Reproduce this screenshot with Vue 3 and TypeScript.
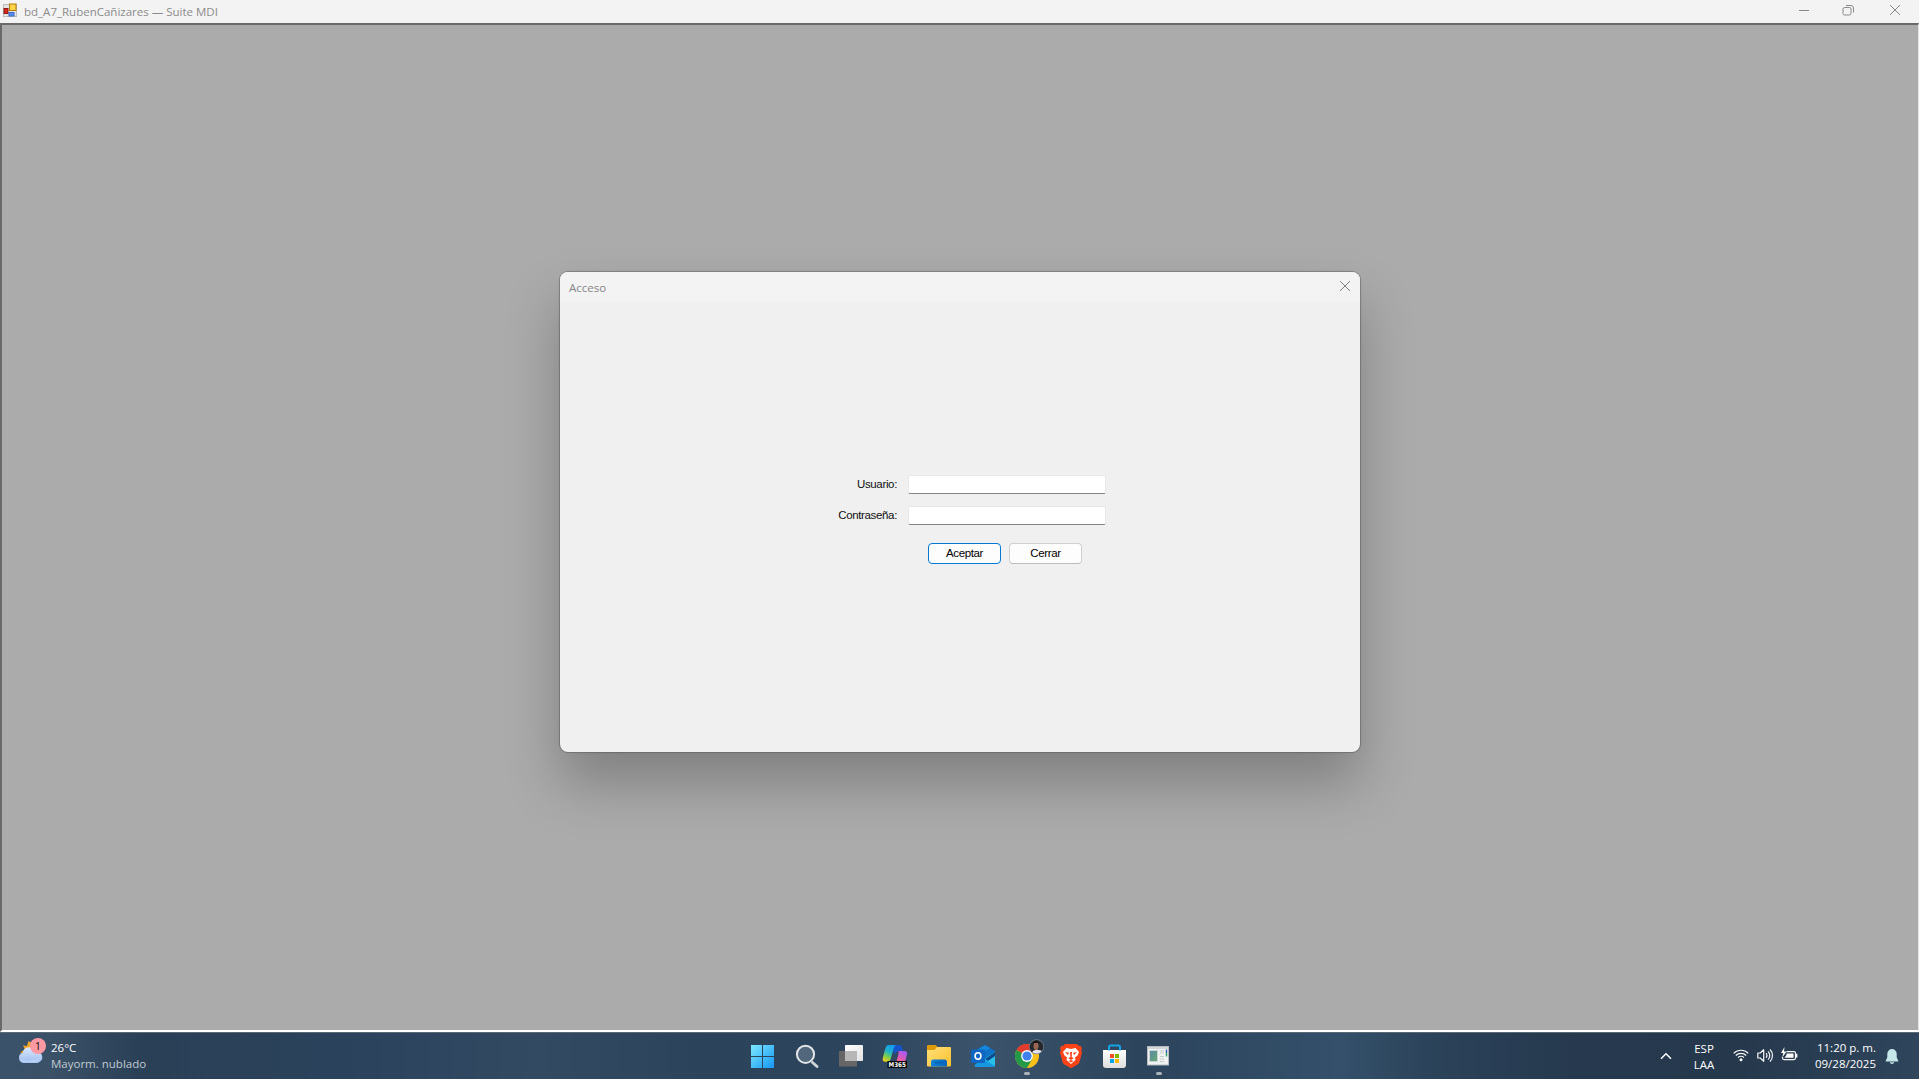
<script setup lang="ts">
import { ref } from 'vue'

interface Field {
  id: string
  label: string
  type: string
}

const fields: Field[] = [
  { id: 'usuario', label: 'Usuario:', type: 'text' },
  { id: 'contrasena', label: 'Contraseña:', type: 'password' },
]
const values = ref<Record<string, string>>({ usuario: '', contrasena: '' })
</script>

<template>
  <div class="screen">
    <header class="titlebar">
      <svg class="app-icon" width="15" height="15" viewBox="0 0 15 15">
        <rect x="0.5" y="1.5" width="13" height="12" fill="#e4e4e4" stroke="#bdbdbd" />
        <rect x="1" y="5.500" width="4" height="5" fill="#d8281c" stroke="#8f1a14" />
        <rect x="6.500" y="1" width="6.500" height="6.500" fill="#ffd44d" stroke="#b57a00" />
        <rect x="6" y="9.500" width="5" height="3.500" fill="#5b8ff0" stroke="#3a66c4" />
      </svg>
      <span class="title">bd_A7_RubenCañizares — Suite MDI</span>
      <svg class="controls" width="119" height="23" viewBox="0 0 119 23" fill="none" stroke="#8a8a8a">
        <path d="M-1 10.500h10" />
        <path d="M44.500 7.500h5a1.500 1.500 0 0 1 1.500 1.500v4.500a1.500 1.500 0 0 1-1.500 1.500h-5a1.500 1.500 0 0 1-1.500-1.500V9a1.500 1.500 0 0 1 1.500-1.500z" />
        <path d="M46 5.500h5a2.500 2.500 0 0 1 2.500 2.500v4.500" />
        <path d="M90 5l10 10M100 5l-10 10" />
      </svg>
    </header>

    <main class="workspace">
      <section class="dialog">
        <div class="dialog-head">
          <span class="dialog-title">Acceso</span>
          <svg width="10" height="10" viewBox="0 0 10 10" stroke="#808080" fill="none">
            <path d="M0 0l10 10M10 0L0 10" />
          </svg>
        </div>
        <form class="form" @submit.prevent>
          <div v-for="f in fields" :key="f.id" class="row">
            <label :for="f.id" :class="f.id">{{ f.label }}</label>
            <input :id="f.id" v-model="values[f.id]" :type="f.type" />
          </div>
          <div class="buttons">
            <button type="submit" class="primary"><span>Aceptar</span></button>
            <button type="button"><span>Cerrar</span></button>
          </div>
        </form>
      </section>
    </main>

    <footer class="taskbar">
      <div class="weather">
        <svg width="30" height="28" viewBox="0 0 30 28">
          <defs>
            <linearGradient id="cloud" x1="0" y1="0" x2="0" y2="1">
              <stop offset="0" stop-color="#dce9fb" />
              <stop offset="1" stop-color="#9bbcf0" />
            </linearGradient>
          </defs>
          <path d="M11.500 3l-1.500 5-4-.5 2 4-5 3 6 1 8-4V6z" fill="#f5a623" />
          <path d="M6.500 25a5.300 5.300 0 0 1-.8-10.300A6.700 6.700 0 0 1 18.500 13.500a5.800 5.800 0 0 1 2 11.500z" fill="url(#cloud)" />
          <path d="M3 21c5 2 13 2 20-1-.8 3.500-3 4.500-5 4.500H7c-2 0-3.500-1.500-4-3.500z" fill="#b9d0f7" />
          <circle cx="21" cy="8" r="8" fill="#ff99a4" />
          <text x="21" y="12" text-anchor="middle" class="badge">1</text>
        </svg>
        <div class="weather-text">
          <div class="temp">26°C</div>
          <div class="cond">Mayorm. nublado</div>
        </div>
      </div>

      <nav class="apps">
        <svg viewBox="0 0 44 47">
          <defs>
            <linearGradient id="win" x1="0" y1="0" x2="1" y2="1">
              <stop offset="0" stop-color="#7ce8ff" />
              <stop offset="1" stop-color="#1597f5" />
            </linearGradient>
          </defs>
          <path d="M10 13h11v11H10zM22 13h11v11H22zM10 25h11v11H10zM22 25h11v11H22z" fill="url(#win)" />
        </svg>
        <svg viewBox="0 0 44 47">
          <path d="M27.500 30.500l4.500 4" stroke="#cfd4d8" stroke-width="3" stroke-linecap="round" />
          <circle cx="20.500" cy="22.300" r="8.600" fill="#52677c" stroke="#e3e6e8" stroke-width="2" />
        </svg>
        <svg viewBox="0 0 44 47">
          <defs>
            <linearGradient id="tv" x1="0" y1="0" x2="1" y2="1">
              <stop offset="0" stop-color="#fff" />
              <stop offset="1" stop-color="#e2e2e2" />
            </linearGradient>
          </defs>
          <rect x="10" y="19" width="18" height="15.500" rx="0.7" fill="#666" />
          <rect x="16" y="13" width="18" height="16" rx="0.7" fill="url(#tv)" />
          <rect x="16" y="19" width="12" height="10" fill="#b7b7b7" />
        </svg>
        <svg viewBox="0 0 44 47">
          <defs>
            <linearGradient id="cpA" x1="0.6" y1="0" x2="0.2" y2="1">
              <stop offset="0" stop-color="#139bf0" />
              <stop offset="0.4" stop-color="#1fb5c9" />
              <stop offset="0.7" stop-color="#7ccf4c" />
              <stop offset="1" stop-color="#f6cd1b" />
            </linearGradient>
            <linearGradient id="cpB" x1="0.7" y1="0" x2="0.2" y2="1">
              <stop offset="0" stop-color="#a45bf0" />
              <stop offset="0.5" stop-color="#ee5aa8" />
              <stop offset="1" stop-color="#ff9845" />
            </linearGradient>
          </defs>
          <path d="M18 13h8c2 0 2.500 1 3 2.500l1.200 3.500h-4c-2.500 0-3.500 1.500-4.200 4z" fill="#1554c8" />
          <path d="M16 13h7c-1.500 1-2 2.300-2.600 4.500l-2.600 9c-.7 2.300-1.600 3.200-3.300 3.200h-2.200c-2.500 0-3-1.700-2.400-4.200l2.200-8.300C12.800 14.500 13.800 13 16 13z" fill="url(#cpA)" />
          <path d="M25.500 19h6c2.500 0 3 1.700 2.400 4l-2.200 8c-.7 3-2 4.500-4.200 4.500h-7c1.500-1 2-2.200 2.600-4.300l2.200-8.500c.5-1.900 0-2.700.2-3.700z" fill="url(#cpB)" />
          <rect x="14.500" y="29" width="19.500" height="7" fill="#080808" />
          <text x="15.500" y="35" class="m365" textLength="17.500" lengthAdjust="spacingAndGlyphs">M365</text>
        </svg>
        <svg viewBox="0 0 44 47">
          <defs>
            <linearGradient id="fold" x1="0" y1="0" x2="1" y2="1">
              <stop offset="0" stop-color="#ffe07a" />
              <stop offset="1" stop-color="#fbc02c" />
            </linearGradient>
            <linearGradient id="foldb" x1="0" y1="0" x2="1" y2="0">
              <stop offset="0" stop-color="#0d83d8" />
              <stop offset="1" stop-color="#0865bd" />
            </linearGradient>
          </defs>
          <path d="M10 20v-6q0-1 1-1h7q1 0 1.500.7l1.500 1.800V20z" fill="#dd9b08" />
          <path d="M10 18h7.500l2.500-3h13q1 0 1 1v17.500q0 1-1 1H11q-1 0-1-1z" fill="url(#fold)" />
          <path d="M14 34.500v-4.500q0-2.500 2.500-2.500h11q2.500 0 2.500 2.500v4.500z" fill="url(#foldb)" />
          <path d="M18 30.800h8" stroke="#055b9f" />
        </svg>
        <svg viewBox="0 0 44 47">
          <path d="M13 19l9.500-5.500q1.200-.7 2.400 0L34 19v6l-10 6-11-5z" fill="#0b5dad" />
          <path d="M16 18l7-4.500q1-.6 2 0l4.500 2.800L18 24z" fill="#1688dc" />
          <path d="M29 16l5 3-12 8.500-6-3.500z" fill="#0f72c8" />
          <path d="M34 19.500V33q0 2-2 2H16q-2 0-2.500-1.500z" fill="#29bfe8" />
          <path d="M22 27l12 7q-.7 1-2 1H16q-2 0-2.500-2z" fill="#1598df" />
          <path d="M24 27l10-7v4l-7 5z" fill="#0d4b92" />
          <rect x="10" y="17.500" width="14" height="13.500" rx="1" fill="#0c66c2" />
          <ellipse cx="17" cy="24" rx="2.900" ry="3.200" fill="none" stroke="#fff" stroke-width="1.600" />
        </svg>
        <svg viewBox="0 0 44 47">
          <defs>
            <clipPath id="avatar"><circle cx="31.500" cy="14.800" r="6.900" /></clipPath>
          </defs>
          <circle cx="22" cy="24" r="12" fill="#fbc11a" />
          <path d="M22 24L11.600 18A12 12 0 0 1 32.400 18z" fill="#e33b2e" />
          <path d="M11.600 18A12 12 0 0 0 22 36l5.200-9L22 24z" fill="#249a49" />
          <path d="M11.600 18A12 12 0 0 1 32.400 18H22z" fill="#e33b2e" />
          <circle cx="22" cy="24" r="5.900" fill="#fff" />
          <circle cx="22" cy="24" r="4.600" fill="#4081ee" />
          <circle cx="31.500" cy="14.800" r="7.500" fill="#718090" />
          <g clip-path="url(#avatar)">
            <rect x="24" y="7" width="15" height="15" fill="#26292c" />
            <path d="M26 22l2-3 3-1.500 5 1 3 4z" fill="#e3e3ee" />
            <ellipse cx="31" cy="14" rx="2.500" ry="3.700" fill="#9b6656" />
            <path d="M28 13q0-4 3-4t3 4l-1-2h-4z" fill="#171515" />
          </g>
          <rect x="19" y="40" width="6" height="3" rx="1.500" fill="#aab3bb" />
        </svg>
        <svg viewBox="0 0 44 47">
          <path d="M16 12h12l2 2 1.500-.3 1.500 2.500-.8 2 .8 2.300-2.500 9.500q-.5 1.500-2 2.500L22 36.200l-6.500-3.700q-1.500-1-2-2.500L11 20.500l.8-2.300-.8-2 1.500-2.500 1.500.3z" fill="#fa4418" />
          <path d="M17.500 16l4.500 1 4.500-1 3.500 4-1.500 3.500-2.500 2 .5 2.500-4.500 4-4.500-4 .5-2.500-2.500-2L14 20z" fill="#fff" />
          <path d="M16 20l4 .7-1 2.300zM28 20l-4 .7 1 2.300zM21 20h2l-.3 5 2 1.200L22 28l-2.700-1.800 2-1.200zM19.500 29l2.500-1 2.500 1-2.500 1.500z" fill="#fa4418" />
        </svg>
        <svg viewBox="0 0 44 47">
          <defs>
            <linearGradient id="bag" x1="0" y1="0" x2="0" y2="1">
              <stop offset="0" stop-color="#fff" />
              <stop offset="1" stop-color="#dedede" />
            </linearGradient>
          </defs>
          <path d="M10 18h23v15q0 3-3 3H13q-3 0-3-3z" fill="url(#bag)" />
          <path d="M16 18.500V15q0-1.500 1.500-1.500h8Q27 13.500 27 15v3.500" fill="none" stroke="#16a3e5" stroke-width="2" />
          <path d="M17 22h4v4h-4z" fill="#f25022" />
          <path d="M22 22h4v4h-4z" fill="#7fba00" />
          <path d="M17 27h4v4h-4z" fill="#00a4ef" />
          <path d="M22 27h4v4h-4z" fill="#ffb900" />
        </svg>
        <svg viewBox="0 0 44 47">
          <defs>
            <linearGradient id="pane" x1="0" y1="0" x2="1" y2="1">
              <stop offset="0" stop-color="#5f87a4" />
              <stop offset="1" stop-color="#63ad72" />
            </linearGradient>
          </defs>
          <rect x="10.500" y="14.500" width="21" height="18.500" fill="#f0f1f1" stroke="#b5bbc0" />
          <path d="M11 16h20" stroke="#c5cbd0" stroke-width="1.500" />
          <rect x="12.500" y="18.500" width="8" height="11" fill="url(#pane)" stroke="#cbd3d6" />
          <path d="M23 19h4M23 21h4M23 24.500h4M23 27h4M23 29.500h4" stroke="#c5c8ca" />
          <path d="M29.500 17.500v3.500" stroke="#375db4" stroke-width="1.500" />
          <path d="M29.500 21v3.500" stroke="#39a267" stroke-width="1.500" />
          <rect x="19" y="40" width="6" height="3" rx="1.500" fill="#aab3bb" />
        </svg>
      </nav>

      <div class="tray">
        <svg class="chevron" width="12" height="8" viewBox="0 0 12 8"><path d="M1 6.700l5-5 5 5" fill="none" stroke="#fff" stroke-width="1.500" /></svg>
        <div class="lang"><div>ESP</div><div class="laa">LAA</div></div>
        <svg class="status" width="66" height="16" viewBox="0 0 66 16" fill="none" stroke="#f4f6f8" stroke-width="1.200">
          <path d="M.7 6.300a10.300 10.300 0 0 1 14.600 0M2.800 8.500a7.300 7.300 0 0 1 10.400 0M5 10.600a4.300 4.300 0 0 1 6 0" />
          <circle cx="8" cy="12.700" r="1.500" fill="#fff" stroke="none" />
          <path d="M24.800 6h2.400l3.500-3.300v11.600L27.200 11h-2.400z" stroke-linejoin="round" />
          <path d="M33 6.300a3 3 0 0 1 0 4.400M35 4.300a6 6 0 0 1 0 8.400M37 2.500a8.500 8.500 0 0 1 0 12" />
          <path d="M53.500 4.600h7.500q1.500 0 1.500 1.500v5q0 1.500-1.500 1.500H51q-1.500 0-1.500-1.500V10" />
          <path d="M53.500 6.500h7v4.300h-9l2-2.800z" fill="#fff" stroke="none" />
          <path d="M63.500 6.800v3.700" stroke-width="1.800" />
          <path d="M51.500 0L48 6h2.300l-1 4.500 4.200-6H51z" fill="#fff" stroke="none" />
        </svg>
        <div class="clock"><div class="time">11:20 p. m.</div><div class="date">09/28/2025</div></div>
        <svg class="bell" width="14" height="16" viewBox="0 0 14 16" fill="#c5e7ea">
          <path d="M7 0a4.700 4.700 0 0 1 4.700 4.700v3.500L13.300 12q.2.600-.5.600H1.200q-.7 0-.5-.6l1.600-3.800V4.700A4.700 4.700 0 0 1 7 0zM4.700 13.300h4.600a2.400 2.400 0 0 1-4.600 0z" />
        </svg>
      </div>
    </footer>
  </div>
</template>

<style>
body {
  margin: 0;
  overflow: hidden;
}
</style>

<style scoped>
.screen {
  width: 1919px;
  height: 1079px;
  display: flex;
  flex-direction: column;
  font-family: "Open Sans", "Noto Sans", sans-serif;
  background: #ababab;
}
.titlebar {
  height: 23px;
  flex: none;
  display: flex;
  align-items: flex-start;
  background: #f3f3f3;
  color: #8b8b8b;
}
.app-icon {
  margin: 3px 0 0 3px;
}
.title {
  margin-left: 6px;
  font-size: 11.5px;
  line-height: 23px;
  white-space: nowrap;
}
.controls {
  margin-left: auto;
  overflow: visible;
}
.workspace {
  flex: 1;
  box-sizing: border-box;
  border-style: solid;
  border-width: 2px 1px 2px 2px;
  border-color: #696969 #e3e3e3 #fff #696969;
  box-shadow: inset 0 0 0 0 #696969;
  background: #ababab;
  padding: 247px 0 0 558px;
}
.dialog {
  width: 800px;
  height: 480px;
  border-radius: 8px;
  background: #f0f0f0;
  overflow: hidden;
  box-shadow: 0 0 0 1px rgba(80, 80, 80, 0.35), 0 0 3px rgba(0, 0, 0, 0.16), 0 31px 54px rgba(0, 0, 0, 0.25);
}
.dialog-head {
  height: 30px;
  box-sizing: border-box;
  padding: 0 10px 0 9px;
  display: flex;
  align-items: center;
  justify-content: space-between;
  background: #f3f3f3;
}
.dialog-head svg {
  margin-bottom: 2px;
  overflow: visible;
}
.dialog-title {
  font-size: 11.5px;
  color: #868686;
}
.form {
  display: flex;
  flex-direction: column;
  gap: 11px;
  padding: 172px 254px 0 0;
}
.row {
  display: flex;
  justify-content: flex-end;
  align-items: center;
  height: 20px;
  font-size: 12px;
  color: #111;
}
label {
  font-family: "Liberation Sans", Arial, sans-serif;
  font-size: 11.5px;
  letter-spacing: -0.35px;
  margin-right: 11px;
}
input {
  box-sizing: border-box;
  width: 198px;
  height: 19px;
  padding: 0 4px;
  border: 1px solid #e8e8e8;
  border-bottom: 1px solid #858585;
  border-radius: 2px;
  background: #fff;
  outline: none;
}
.buttons {
  display: flex;
  justify-content: flex-end;
  gap: 8px;
  padding: 7px 24px 0 0;
}
button {
  box-sizing: border-box;
  width: 73px;
  height: 21px;
  padding: 0;
  border: 1px solid #d0d0d0;
  border-bottom-color: #bcbcbc;
  border-radius: 4px;
  background: #fdfdfd;
  color: #000;
  font-family: "Liberation Sans", Arial, sans-serif;
  font-size: 11.5px;
  letter-spacing: -0.35px;
  line-height: 19px;
}
button.primary {
  border-color: #0078d4;
}
.taskbar {
  height: 47px;
  flex: none;
  display: grid;
  grid-template-columns: 741px 440px 1fr;
  color: #fff;
  font-size: 12px;
  border-top: 0;
  box-shadow: inset 0 1px #5a6976;
  background: linear-gradient(90deg, #3b536a 0, #3a5168 50px, #2a4057 140px, #2a425b 340px, #324b63 540px, #2b435b 700px, #2c445c 860px, #3b546c 980px, #2c445c 1140px, #34506a 1340px, #2a4157 1450px, #26394e 1580px, #26384c 1740px, #2e455c 1919px);
}
.weather {
  display: flex;
  padding-left: 17px;
}
.weather svg {
  margin-top: 6px;
}
.badge {
  font-size: 11px;
  fill: #111;
}
.weather-text {
  margin: 8px 0 0 4px;
  line-height: 16px;
  font-size: 11.5px;
}
.cond {
  color: #c0cad2;
}
.apps {
  display: flex;
}
.apps svg {
  width: 44px;
  height: 47px;
}
.m365 {
  font-family: "DejaVu Sans", sans-serif;
  font-weight: bold;
  font-size: 6.5px;
  fill: #fff;
}
.tray {
  display: flex;
  justify-content: flex-end;
  padding-right: 20px;
}
.chevron {
  margin: 20px 21px 0 0;
}
.lang {
  width: 22px;
  text-align: center;
  padding-top: 9px;
  line-height: 16px;
  font-size: 11.5px;
}
.status {
  margin: 15px 0 0 18px;
}
.clock {
  width: 77px;
  padding-top: 8px;
  text-align: right;
  line-height: 16px;
  font-size: 11.5px;
  white-space: nowrap;
}
.bell {
  margin: 17px 0 0 9px;
}
</style>
